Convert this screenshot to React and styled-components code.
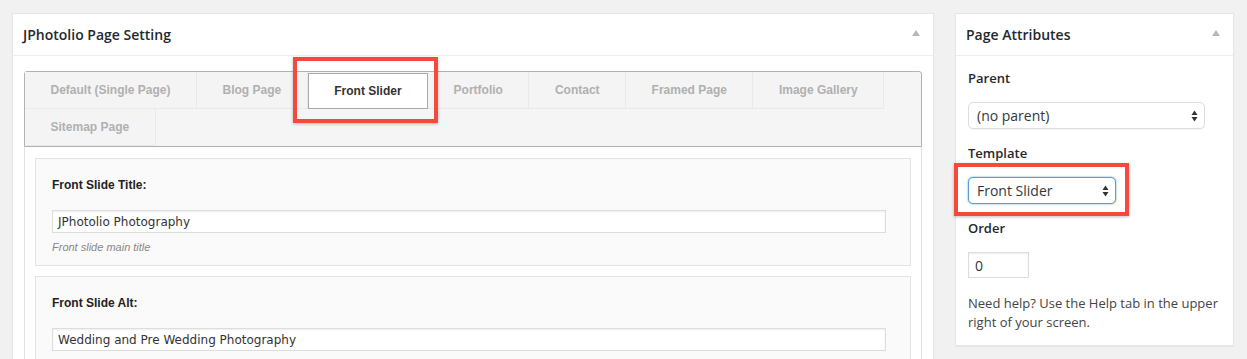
import React from "react";
import styled, { createGlobalStyle } from "styled-components";

const Global = createGlobalStyle`
  html, body { margin: 0; padding: 0; background: #f1f1f1; overflow: hidden; }
  * { box-sizing: border-box; }
`;

const Page = styled.div`
  display: flex;
  align-items: flex-start;
  gap: 21px;
  padding: 13px 14px 0 12px;
  font-family: "Open Sans", "Liberation Sans", sans-serif;
  color: #23282d;
`;

const Postbox = styled.section`
  position: relative;
  width: ${(p) => p.$w}px;
  flex: none;
  background: #fff;
  border: 1px solid #e5e5e5;
  box-shadow: 0 1px 1px rgba(0, 0, 0, 0.04);
`;

const BoxHeader = styled.header`
  display: flex;
  align-items: center;
  justify-content: space-between;
  height: 42px;
  padding: 0 13px 0 10px;
  border-bottom: 1px solid #eee;
`;

const BoxTitle = styled.h2`
  margin: 0;
  font-size: 14px;
  font-weight: 600;
  color: #23282d;
  line-height: 1.4;
`;

const Toggle = styled.span`
  width: 0;
  height: 0;
  border-left: 4.5px solid transparent;
  border-right: 4.5px solid transparent;
  border-bottom: 6px solid #b4b9be;
  margin-top: -4px;
`;

const LeftInside = styled.div`
  padding: 15px 11px 0;
`;

const TabBar = styled.ul`
  display: flex;
  flex-wrap: wrap;
  margin: 0;
  padding: 0;
  list-style: none;
  background: #f5f5f5;
  border: 1px solid #b2b2b2;
  border-radius: 3px 3px 0 0;
`;

const Tab = styled.li`
  position: relative;
  padding: 0 25.5px;
  display: flex;
  align-items: center;
  font-family: "Liberation Sans", Arial, sans-serif;
  font-weight: bold;
  font-size: 12px;
  color: ${(p) => (p.$active ? "#333" : "#b0b0b0")};
  background: ${(p) => (p.$active ? "#fff" : "#f4f4f4")};
  border-right: 1px solid ${(p) => (p.$active ? "#a9a9a9" : "#e9e9e9")};
  border-bottom: 1px solid ${(p) => (p.$active ? "#a9a9a9" : "#e9e9e9")};
  border-left: ${(p) => (p.$active ? "1px solid #a9a9a9" : "0")};
  border-top: ${(p) => (p.$active ? "1px solid #a9a9a9" : "0")};
  margin: ${(p) => (p.$active ? "1px 0 0" : "0")};
  height: ${(p) => (p.$active ? "36px" : "37px")};
`;

const Annotation = styled.span`
  position: absolute;
  top: ${(p) => p.$t}px;
  right: ${(p) => p.$r}px;
  bottom: ${(p) => p.$b}px;
  left: ${(p) => p.$l}px;
  border: 4px solid #f5493d;
  box-shadow: 0 1px 3px rgba(0, 0, 0, 0.25);
  pointer-events: none;
  z-index: 2;
`;

const TabContent = styled.div`
  display: flex;
  flex-direction: column;
  gap: 10px;
  padding: 11px 10px 0;
  background: #fff;
  border-left: 1px solid #e3e3e3;
  border-right: 1px solid #e3e3e3;
`;

const Field = styled.div`
  display: flex;
  flex-direction: column;
  padding: 18px 24px 11px 16px;
  background: #fafafa;
  border: 1px solid #e3e3e3;
`;

const FieldLabel = styled.label`
  font-family: "Liberation Sans", Arial, sans-serif;
  font-weight: bold;
  font-size: 12px;
  line-height: 16px;
  color: #222;
  margin-bottom: 17px;
`;

const TextInput = styled.div`
  height: 23px;
  display: flex;
  align-items: center;
  padding: 0 5px;
  background: #fff;
  border: 1px solid #ddd;
  box-shadow: inset 0 1px 2px rgba(0, 0, 0, 0.07);
  font-family: "DejaVu Sans", Verdana, sans-serif;
  font-size: 12px;
  color: #333;
`;

const Desc = styled.p`
  margin: 7px 0 0;
  font-family: "Liberation Sans", Arial, sans-serif;
  font-style: italic;
  font-size: 11px;
  line-height: 14px;
  color: #888;
`;

const RightInside = styled.div`
  display: flex;
  flex-direction: column;
  align-items: flex-start;
  gap: 15px;
  padding: 13px 12px 13px;
`;

const AttrLabel = styled.div`
  font-size: 13px;
  font-weight: 600;
  line-height: 18px;
  color: #23282d;
`;

const SelectBox = styled.div`
  position: relative;
  display: flex;
  align-items: center;
  justify-content: space-between;
  width: ${(p) => p.$w}px;
  height: 27px;
  padding: 0 6px 0 8px;
  background: #fff;
  border: 1px solid ${(p) => (p.$focus ? "#5b9dd9" : "#ddd")};
  border-radius: 5px;
  box-shadow: ${(p) =>
    p.$focus ? "0 0 2px rgba(30, 140, 190, 0.8)" : "0 1px 1px rgba(0,0,0,0.04)"};
  font-size: 14px;
  color: #32373c;
`;

const OrderInput = styled.div`
  width: 61px;
  height: 26px;
  display: flex;
  align-items: center;
  padding: 0 6px;
  border: 1px solid #ddd;
  box-shadow: inset 0 1px 2px rgba(0, 0, 0, 0.07);
  font-size: 14px;
  color: #32373c;
`;

const Help = styled.p`
  margin: 1px 0 0;
  font-size: 13px;
  line-height: 19px;
  color: #444;
`;

const Updown = () => (
  <svg width="7" height="12" viewBox="0 0 7 12">
    <path d="M3.5 0.5 L6.5 5 L0.5 5 Z" fill="#333" />
    <path d="M3.5 11.5 L6.5 7 L0.5 7 Z" fill="#333" />
  </svg>
);

const tabs = [
  "Default (Single Page)",
  "Blog Page",
  "Front Slider",
  "Portfolio",
  "Contact",
  "Framed Page",
  "Image Gallery",
  "Sitemap Page",
];

export default function App() {
  return (
    <>
      <Global />
      <Page>
        <Postbox $w={922}>
          <BoxHeader>
            <BoxTitle>JPhotolio Page Setting</BoxTitle>
            <Toggle />
          </BoxHeader>
          <LeftInside>
            <TabBar>
              {tabs.map((t) => (
                <Tab key={t} $active={t === "Front Slider"}>
                  {t}
                  {t === "Front Slider" && <Annotation $t={-17} $r={-11} $b={-15} $l={-16} />}
                </Tab>
              ))}
            </TabBar>
            <TabContent>
              <Field>
                <FieldLabel>Front Slide Title:</FieldLabel>
                <TextInput>JPhotolio Photography</TextInput>
                <Desc>Front slide main title</Desc>
              </Field>
              <Field>
                <FieldLabel>Front Slide Alt:</FieldLabel>
                <TextInput>Wedding and Pre Wedding Photography</TextInput>
              </Field>
            </TabContent>
          </LeftInside>
        </Postbox>
        <Postbox $w={279}>
          <BoxHeader>
            <BoxTitle>Page Attributes</BoxTitle>
            <Toggle />
          </BoxHeader>
          <RightInside>
            <AttrLabel>Parent</AttrLabel>
            <SelectBox $w={237}>
              (no parent)
              <Updown />
            </SelectBox>
            <AttrLabel>Template</AttrLabel>
            <SelectBox $w={148} $focus>
              Front Slider
              <Updown />
              <Annotation $t={-15} $r={-14} $b={-13} $l={-15} />
            </SelectBox>
            <AttrLabel>Order</AttrLabel>
            <OrderInput>0</OrderInput>
            <Help>Need help? Use the Help tab in the upper right of your screen.</Help>
          </RightInside>
        </Postbox>
      </Page>
    </>
  );
}
